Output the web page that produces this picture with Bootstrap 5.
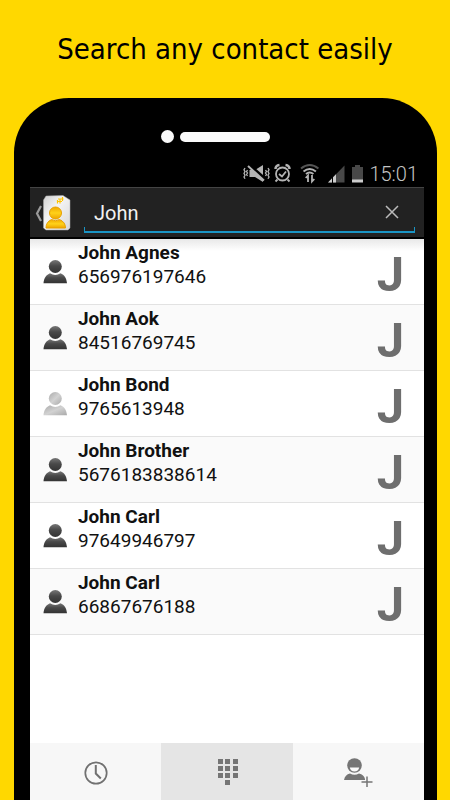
<!DOCTYPE html>
<html lang="en">
<head>
<meta charset="utf-8">
<meta name="viewport" content="width=device-width, initial-scale=1">
<title>Search any contact easily</title>
<link href="https://cdn.jsdelivr.net/npm/bootstrap@5.3.0/dist/css/bootstrap.min.css" rel="stylesheet">
<style>
body{background:#ffd800;font-family:Roboto,"Liberation Sans",sans-serif;color:#111}
.headline{font:400 29px/40px "DejaVu Sans Condensed","Noto Sans",sans-serif;color:#000;padding:29px 0}
.phone{background:#000;margin:0 13px 0 14px;padding:0 13px 0 16px;border-radius:55px 55px 0 0}
.earpiece{padding:32px 0 17px 131px;gap:6px}
.lens{width:13px;height:13px;background:#fafafa}
.speaker{width:90px;height:10px;background:#fafafa}
.status{height:27px;padding-right:6px;color:#c4c4c4;font-size:20px;font-weight:300;line-height:28px}
.searchbar{background:#222;border-top:1px solid #444;border-bottom:2px solid #000;height:52px;padding:0 9px 0 4px}
.searchfield{border-bottom:2px solid #1a94c4;height:40px;margin-left:12px}
.searchfield::before,.searchfield::after{content:"";width:1px;height:4px;background:#1a94c4;align-self:flex-end}
.searchfield input{color:#f2f2f2;font-size:20px;line-height:24px;padding:2px 0 0 9px;outline:0;min-width:0}
.searchfield button{width:44px}
.contacts{background:#fff}
.contact{height:66px;border:0;border-bottom:1px solid #e2e2e2!important;padding:0 20px 0 12px;border-radius:0;color:#111}
.contact:nth-child(even){background:#fafafa}
.contact:first-child{background:linear-gradient(#e8e8e8,#fff 12px)}
.details{padding:1px 0 0 10px}
.fullname{font-size:19px;line-height:25px;font-weight:700}
.number{font-size:19px;line-height:24px}
.initial{font-size:49px;line-height:65px;font-weight:700;color:#6e6e6e;padding-top:3px}
.tabs{background:#f7f7f7;height:57px}
.tabs button{background:#f7f7f7}
.tabs button.current{background:#e5e5e5}
</style>
<script src="https://cdn.jsdelivr.net/npm/bootstrap@5.3.0/dist/js/bootstrap.bundle.min.js"></script>
</head>
<body class="d-flex flex-column min-vh-100">
<svg width="0" height="0" class="position-absolute" aria-hidden="true">
<defs>
<linearGradient id="dark" x2="0" y2="1"><stop stop-color="#777"/><stop offset=".45" stop-color="#494949"/><stop offset="1" stop-color="#333"/></linearGradient>
<linearGradient id="pale" x2="1" y2="1"><stop stop-color="#aaa"/><stop offset=".5" stop-color="#d2d2d2"/><stop offset="1" stop-color="#a9a9a9"/></linearGradient>
<linearGradient id="gold" x2="0" y2="1"><stop stop-color="#f0a800"/><stop offset=".5" stop-color="#ffd21a"/><stop offset="1" stop-color="#eea500"/></linearGradient>
<linearGradient id="paper" x2="1" y2="1"><stop stop-color="#d0d0d0"/><stop offset=".4" stop-color="#f4f4f4"/><stop offset="1" stop-color="#d8d8d8"/></linearGradient>
<symbol id="person" viewBox="0 0 26 26"><circle cx="13.300" cy="7.500" r="6.500"/><path d="M1.500 24.300C2 18.500 4.500 15.800 8 14.200Q13.300 17.800 18.500 14.200C22.500 16 24.500 19 25 24.300Z"/></symbol>
</defs>
</svg>
<h1 class="headline m-0 text-center">Search any contact easily</h1>
<main class="phone flex-grow-1 d-flex flex-column">
<div class="earpiece d-flex align-items-center"><span class="lens rounded-circle"></span><span class="speaker rounded-pill"></span></div>
<div class="status d-flex justify-content-end align-items-center">
<svg width="127" height="27" viewBox="0 0 127 27" fill="none" stroke="#b4b4b4" stroke-width="1.500" role="img" aria-label="Vibrate, alarm, Wi-Fi, signal and battery">
<g transform="translate(1 0)">
<path d="M2 8l-1 1.800 1 1.800-1 1.800 1 1.800-1 1.800 1 1.800M4.500 10l-1 1.500 1 1.500-1 1.500 1 1.500M25 8l1 1.800-1 1.800 1 1.800-1 1.800 1 1.800-1 1.800M22.500 10l1 1.500-1 1.500 1 1.500-1 1.500" stroke-width="1.300"/>
<path d="M6.500 10h5.500l8-5v17l-8-5H6.500Z" fill="#b4b4b4" stroke="none"/><path d="M6 5L22 19" stroke="#000" stroke-width="3.500"/><path d="M5 6L21 20.500" stroke-width="2"/>
<circle cx="39.500" cy="14" r="6.500" stroke-width="1.800"/><path d="M36 14l3 2.500 4-5M34.500 19.500l-2 2M44.500 19.500l2 2" stroke-width="1.800"/><path d="M32.500 9q0-3.500 4-4M46.500 9q0-3.500-4-4" stroke-width="2.500"/>
<path d="M58 8.500q8.700-7 17.400 0" stroke="#555" stroke-width="2"/><path d="M60.500 11.500q6.200-5 12.400 0M63 14q3.700-3 7.400 0" stroke-width="2"/><path d="M65 22v-6M62.700 18l2.300-2.500v4M69 15v6M71.300 19L69 21.500v-4" stroke-width="1.800"/>
<path d="M85 22.500L101.500 5.500v17Z" fill="#484848" stroke="none"/><path d="M85 22.500L93 14.200v8.300Z" fill="#ccc" stroke="none"/><path d="M89.500 15v8" stroke="#000" stroke-width="1"/>
<path d="M109 7h3V5h5v2h3v15h-11Z" fill="#484848" stroke="none"/><path d="M109 19.500h11v3h-11Z" fill="#ccc" stroke="none"/>
</g>
</svg>
<time>15:01</time>
</div>
<form class="searchbar d-flex align-items-center" role="search">
<button type="button" class="btn p-0 border-0 d-flex" aria-label="Back">
<svg width="38" height="38" viewBox="0 0 38 38"><path d="M7 12L3 19.500 7 27" fill="none" stroke="#999" stroke-width="2.200"/>
<path d="M12 2L29 1.500 36 6V34L34 36H12L9.500 34V6Z" fill="url(#paper)" stroke="#aaa" stroke-width=".5"/>
<path d="M28.500 3v4M26 5v4.500M23.500 6v3.500M23 7.500h5M24 5h5.500" stroke="#ffc400" stroke-width="1.200"/>
<circle cx="21.500" cy="19" r="6" fill="url(#gold)" stroke="#e7a000"/><path d="M12 34q0-6 5.500-8.500 4 2.500 8 0Q31.500 28 31.500 34Z" fill="url(#gold)" stroke="#e7a000"/></svg>
</button>
<div class="searchfield flex-grow-1 d-flex align-items-stretch">
<input class="flex-grow-1 bg-transparent border-0" type="text" value="John" aria-label="Search contacts">
<button type="button" class="btn p-0 border-0" aria-label="Clear search"><svg width="14" height="14" viewBox="0 0 14 14" class="d-block mx-auto" stroke="#bbb" stroke-width="1.500"><path d="M1 1l12 12M13 1L1 13"/></svg></button>
</div>
</form>
<div class="contacts flex-grow-1 d-flex flex-column">
<ul class="list-group list-group-flush flex-grow-1">
<li class="list-group-item contact d-flex align-items-start"><svg class="align-self-center" width="26" height="26" fill="url(#dark)"><use href="#person"/></svg><div class="details flex-grow-1"><div class="fullname">John Agnes</div><div class="number">656976197646</div></div><span class="initial">J</span></li>
<li class="list-group-item contact d-flex align-items-start"><svg class="align-self-center" width="26" height="26" fill="url(#dark)"><use href="#person"/></svg><div class="details flex-grow-1"><div class="fullname">John Aok</div><div class="number">84516769745</div></div><span class="initial">J</span></li>
<li class="list-group-item contact d-flex align-items-start"><svg class="align-self-center" width="26" height="26" fill="url(#pale)"><use href="#person"/></svg><div class="details flex-grow-1"><div class="fullname">John Bond</div><div class="number">9765613948</div></div><span class="initial">J</span></li>
<li class="list-group-item contact d-flex align-items-start"><svg class="align-self-center" width="26" height="26" fill="url(#dark)"><use href="#person"/></svg><div class="details flex-grow-1"><div class="fullname">John Brother</div><div class="number">5676183838614</div></div><span class="initial">J</span></li>
<li class="list-group-item contact d-flex align-items-start"><svg class="align-self-center" width="26" height="26" fill="url(#dark)"><use href="#person"/></svg><div class="details flex-grow-1"><div class="fullname">John Carl</div><div class="number">97649946797</div></div><span class="initial">J</span></li>
<li class="list-group-item contact d-flex align-items-start"><svg class="align-self-center" width="26" height="26" fill="url(#dark)"><use href="#person"/></svg><div class="details flex-grow-1"><div class="fullname">John Carl</div><div class="number">66867676188</div></div><span class="initial">J</span></li>
</ul>
<nav class="tabs row g-0" aria-label="Sections">
<button type="button" class="col border-0 p-0" aria-label="Recent calls"><svg width="26" height="26" viewBox="0 0 26 26" fill="none" stroke="#717171" stroke-width="1.700"><circle cx="13" cy="14" r="10.700"/><path d="M12.800 6v8.500l5 5" stroke-width="2"/></svg></button>
<button type="button" class="col border-0 p-0 current" aria-label="Keypad"><svg width="22" height="28" viewBox="0 0 22 28" fill="#757575"><path d="M2 1h5v5H2ZM9 1h5v5H9ZM17 1h5v5h-5ZM2 8h5v5H2ZM9 8h5v5H9ZM17 8h5v5h-5ZM2 15h5v5H2ZM9 15h5v5H9ZM17 15h5v5h-5ZM9 22h5v5H9Z"/></svg></button>
<button type="button" class="col border-0 p-0" aria-label="Add contact"><svg width="30" height="30" viewBox="0 0 30 30" fill="#757575"><circle cx="11.500" cy="8.500" r="7.300"/><path d="M6.800 10.500h9.400q-.8 4-4.700 4t-4.700-4Z" fill="#fafafa"/><path d="M1 23q1-5.500 6-6.500 4.500 2.500 9 0 5 1 6 5.500v1Z"/><path d="M24 19.500v11M18.500 25h11" stroke="#757575" stroke-width="1.500"/></svg></button>
</nav>
</div>
</main>
</body>
</html>
